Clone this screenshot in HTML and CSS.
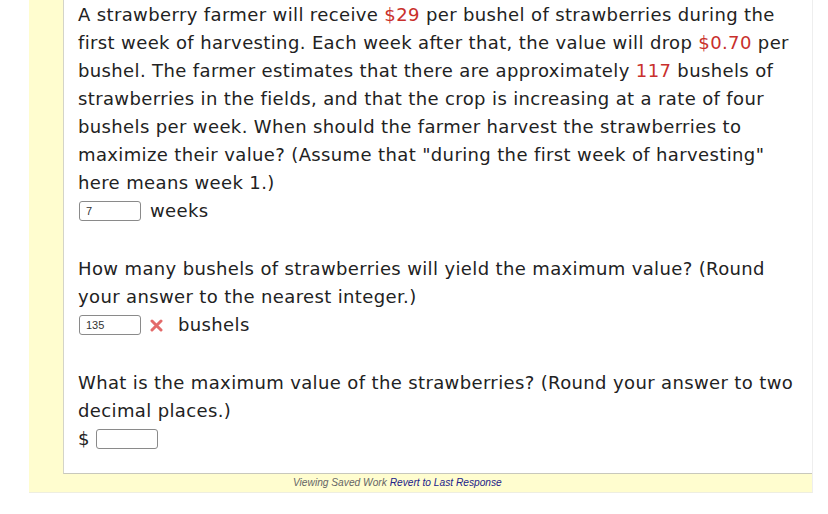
FILE: index.html
```html
<!DOCTYPE html>
<html>
<head>
<meta charset="utf-8">
<link rel="stylesheet" href="styles.css">
</head>
<body>
<div class="outer">
  <div class="panel">
    <p class="q">A strawberry farmer will receive <span class="red">$29</span> per bushel of strawberries during the<br>first week of harvesting. Each week after that, the value will drop <span class="red">$0.70</span> per<br>bushel. The farmer estimates that there are approximately <span class="red">117</span> bushels of<br>strawberries in the fields, and that the crop is increasing at a rate of four<br>bushels per week. When should the farmer harvest the strawberries to<br>maximize their value? (Assume that "during the first week of harvesting"<br>here means week 1.)</p>
    <div class="ans"><span class="box">7</span><span class="unit">weeks</span></div>
    <p class="q sec">How many bushels of strawberries will yield the maximum value? (Round<br>your answer to the nearest integer.)</p>
    <div class="ans"><span class="box">135</span><svg class="xm" width="13" height="13" viewBox="0 0 13 13"><path d="M2 2 L11 11 M11 2 L2 11" stroke="#e36a6a" stroke-width="3" stroke-linecap="round"/></svg><span class="unit">bushels</span></div>
    <p class="q sec">What is the maximum value of the strawberries? (Round your answer to two<br>decimal places.)</p>
    <div class="ans"><span class="dollar">$</span><span class="box"></span></div>
  </div>
  <div class="foot"><span class="saved">Viewing Saved Work</span> <span class="link">Revert to Last Response</span></div>
</div>
</body>
</html>
```
FILE: styles.css
```css
html, body {
  margin: 0;
  padding: 0;
  background: #ffffff;
}
.outer {
  margin-left: 29px;
  width: 784px;
  background: #fffdcf;
  padding-left: 34px;
  box-sizing: border-box;
  border-right: 1px solid #eeeeee;
  border-bottom: 1px solid #eeeee0;
}
.panel {
  background: #ffffff;
  border-left: 1px solid #d4d4c8;
  border-bottom: 1px solid #c8c8bc;
  padding: 1px 0 20px 14px;
  font-family: "DejaVu Sans", Verdana, sans-serif;
  font-size: 18px;
  letter-spacing: 0.37px;
  line-height: 28px;
  color: #222222;
}
.q {
  margin: 0;
  white-space: nowrap;
}
.sec {
  margin-top: 30px;
}
.red {
  color: #c9302c;
}
.ans {
  display: flex;
  align-items: center;
  height: 28px;
}
.box {
  display: inline-block;
  width: 62px;
  height: 20px;
  box-sizing: border-box;
  border: 1px solid #8a8a8a;
  border-radius: 3px;
  font-family: "Liberation Sans", Arial, sans-serif;
  font-size: 11px;
  letter-spacing: 0;
  line-height: 18px;
  padding-left: 6px;
  color: #333;
  margin-left: 1px;
}
.unit {
  margin-left: 9px;
}
.xm {
  margin-left: 9px;
  margin-right: 6px;
}
.dollar {
  margin-right: 5px;
}
.foot {
  height: 18px;
  font-family: "Liberation Sans", Arial, sans-serif;
  font-size: 10.2px;
  font-style: italic;
  line-height: 18px;
  padding-left: 230px;
}
.saved {
  color: #666666;
}
.link {
  color: #22228a;
}
```
